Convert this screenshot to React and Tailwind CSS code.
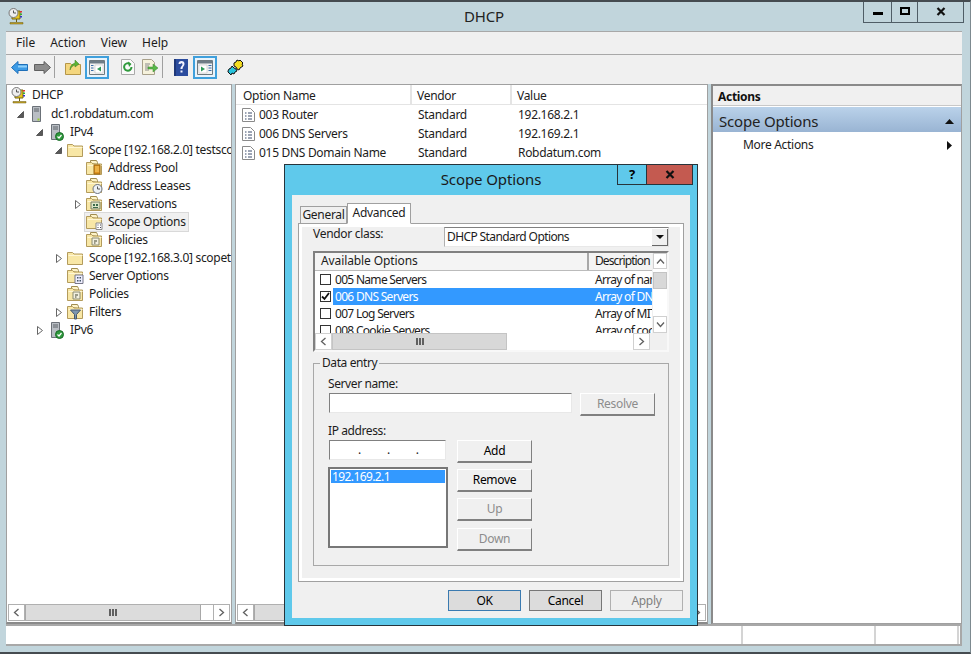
import React from "react";

const Folder = ({ children, tab = false }) => (
  <svg width="17" height="16" viewBox="0 0 17 16" className="shrink-0">
    {tab && <path d="M4.500 3.500V.5h6l1 2v2z" fill="#fdf3c8" stroke="#a08c50" />}
    <path d="M.5 14.500V2.500h5L7 4h8.500v10.500z" fill="#f8e7a6" stroke="#b39b5c" />
    <path d="M1.500 5h14v1h-14z" fill="#fff6d4" />
    {children}
  </svg>
);

const Expanded = () => (
  <svg width="7" height="7" viewBox="0 0 7 7"><path d="M6.500.5v6h-6z" fill="#595959" stroke="#595959" /></svg>
);
const Collapsed = () => (
  <svg width="6" height="9" viewBox="0 0 6 9"><path d="M.5.5l5 4-5 4z" fill="#fff" stroke="#666" /></svg>
);

const DhcpIcon = () => (
  <svg width="17" height="17" viewBox="0 0 17 17" className="shrink-0">
    <path d="M4 3h8v8H4z" fill="#e8c520" stroke="#7a6a10" />
    <circle cx="5.500" cy="5" r="4.500" fill="#eee" stroke="#777" />
    <path d="M5.500 2.500V5H8" fill="none" stroke="#555" />
    <path d="M12 3h2v1.500h-2z" fill="#d33" />
    <path d="M12 5.500h2V7h-2z" fill="#3a3" />
    <path d="M12 8h2v1.500h-2z" fill="#33c" />
    <path d="M8 11h1v3H8z" fill="#6a5a10" />
    <path d="M2 14.500h13V16H2z" fill="#c6a525" stroke="#6a5a10" strokeWidth=".5" />
  </svg>
);
const ServerIcon = ({ check }) => (
  <svg width="14" height="17" viewBox="0 0 14 17" className="shrink-0">
    <path d="M1.500.5h8v15h-8z" fill="#b9bec4" stroke="#6b7178" />
    <path d="M3 3h5M3 5h5" stroke="#5c6268" />
    {!check && <path d="M6.500 12.500h2v2h-2z" fill="#9c3" />}
    {check && <circle cx="9.500" cy="12.500" r="4" fill="#2e9a3c" stroke="#1a6a28" />}
    {check && <path d="M7.500 12.500L9 14l2.500-3" fill="none" stroke="#fff" strokeWidth="1.200" />}
  </svg>
);
const PropIcon = () => (
  <svg width="13" height="14" viewBox="0 0 13 14" className="shrink-0">
    <path d="M.5.5h8l4 4v9H.5z" fill="#fff" stroke="#8a8a8a" />
    <path d="M3 5h1.500M6 5h4M3 8h1.500M6 8h4M3 11h1.500M6 11h4" stroke="#3b4a6b" />
  </svg>
);

const iconFor = {
  server: <ServerIcon />,
  ipv: <ServerIcon check />,
  folder: <Folder />,
  pool: <Folder tab><path d="M8 5h6v9H8z" fill="#e0941e" stroke="#9a6410" /><path d="M9 7h4M9 9h4M9 11h4" stroke="#fbd070" /></Folder>,
  leases: <Folder tab><circle cx="11.500" cy="11" r="4.500" fill="#eef2f6" stroke="#6b7280" /><path d="M11.500 8.500V11H14" fill="none" stroke="#555" /></Folder>,
  res: <Folder tab><path d="M5 6h9v7H5z" fill="#dfe6c8" stroke="#7a7f60" /><path d="M7 8h2v2H7zM10 8h2v2h-2zM7 11h5v1H7z" fill="#3c6a4a" /></Folder>,
  opts: <Folder tab><path d="M10 9h6v6.500h-6z" fill="#fff" stroke="#8a8a8a" /><path d="M11.500 11h1M14 11h1M11.500 13.500h1M14 13.500h1" stroke="#445" /></Folder>,
  sopts: <Folder tab><path d="M8 7h8v8.500H8z" fill="#eef" stroke="#778" /><path d="M10 9h1.500v1.500H10zM12.500 9H14v1.500h-1.500zM10 12h1.500v1.500H10zM12.500 12H14v1.500h-1.500z" fill="#456" /></Folder>,
  pol: <Folder tab><path d="M6 6h7v7H6z" fill="#f3f0e0" stroke="#8a8a70" /><path d="M8 8h3v2H8zM8 10h1.500v2H8z" fill="#9a9a88" /></Folder>,
  filt: <Folder tab><path d="M3.500 6h10l-4 4.500V15h-2v-4.500z" fill="#7d97b0" stroke="#46586c" /></Folder>,
};

const tree = [
  { t: "dc1.robdatum.com", i: "server", cls: "pl-[8px]", ex: "e" },
  { t: "IPv4", i: "ipv", cls: "pl-[27px]", ex: "e" },
  { t: "Scope [192.168.2.0] testscope", i: "folder", cls: "pl-[46px]", ex: "e" },
  { t: "Address Pool", i: "pool", cls: "pl-[65px]" },
  { t: "Address Leases", i: "leases", cls: "pl-[65px]" },
  { t: "Reservations", i: "res", cls: "pl-[65px]", ex: "c" },
  { t: "Scope Options", i: "opts", cls: "pl-[65px]", sel: true },
  { t: "Policies", i: "pol", cls: "pl-[65px]" },
  { t: "Scope [192.168.3.0] scopetwo", i: "folder", cls: "pl-[46px]", ex: "c" },
  { t: "Server Options", i: "sopts", cls: "pl-[46px]" },
  { t: "Policies", i: "pol", cls: "pl-[46px]" },
  { t: "Filters", i: "filt", cls: "pl-[46px]", ex: "c" },
  { t: "IPv6", i: "ipv", cls: "pl-[27px]", ex: "c" },
];

const TreeRow = ({ r }) => (
  <div className={`flex items-center h-[18px] whitespace-nowrap ${r.cls}`}>
    <span className="w-[13px] pr-[2px] flex items-center justify-center shrink-0">
      {r.ex === "e" && <Expanded />}
      {r.ex === "c" && <Collapsed />}
    </span>
    <span className={`flex items-center h-[18px] ${r.sel ? "bg-[#f0f0f0] outline outline-[#d9d9d9] pr-[2px]" : ""}`}>
      <span className="w-[19px] flex items-center justify-center shrink-0">{iconFor[r.i]}</span>
      <span className="pl-[4px] pb-[1px]">{r.t}</span>
    </span>
  </div>
);

const ScrollBtn = ({ dir, cls = "" }) => (
  <div className={`flex items-center justify-center shrink-0 bg-white ${cls}`}>
    <svg width="9" height="9" viewBox="0 0 9 9">
      {dir === "l" && <path d="M6.500 1l-4 3.500 4 3.500" fill="none" stroke="#606060" strokeWidth="1.300" />}
      {dir === "r" && <path d="M2.500 1l4 3.500-4 3.500" fill="none" stroke="#606060" strokeWidth="1.300" />}
      {dir === "u" && <path d="M1 6.500l3.500-4 3.500 4" fill="none" stroke="#606060" strokeWidth="1.300" />}
      {dir === "d" && <path d="M1 2.500l3.500 4 3.500-4" fill="none" stroke="#606060" strokeWidth="1.300" />}
    </svg>
  </div>
);
const Grip = () => (
  <svg width="8" height="7" viewBox="0 0 8 7"><path d="M0 0h2v7H0zM3 0h2v7H3zM6 0h2v7H6z" fill="#606060" /></svg>
);

const Btn = ({ children, dis, cls = "" }) => (
  <div className={`flex items-center justify-center w-[75px] h-[23px] bg-[#f0f0f0] border border-t-white border-l-white border-r-[#808080] border-b-[#808080] border-b-2 ${dis ? "text-[#8c8c8c]" : "text-black"} ${cls}`}>
    {children}
  </div>
);

const ToolBox = ({ children }) => (
  <div className="w-[24px] h-[23px] border-2 border-[#3fa0dc] bg-[#e8f3fb] flex items-center justify-center shrink-0">{children}</div>
);

const PaneIcon = ({ right }) => (
  <svg width="16" height="15" viewBox="0 0 16 15">
    <path d="M.5.5h15v14H.5z" fill="#f2f2f2" stroke="#6f7a80" />
    <path d="M1 1h14v2.500H1z" fill="#6e7c86" />
    {right ? (
      <>
        <path d="M2 5h8v8H2z" fill="#fff" stroke="#bbb" strokeWidth=".5" />
        <path d="M4 6.500L8 9l-4 2.500z" fill="#2f9a58" />
        <path d="M11.500 5.500h3M11.500 8h3M11.500 10.500h3" stroke="#3a6ea8" />
      </>
    ) : (
      <>
        <path d="M6 5h8v8H6z" fill="#fff" stroke="#bbb" strokeWidth=".5" />
        <path d="M12 6.500L8 9l4 2.500z" fill="#2f9a58" />
        <path d="M2 5.500h2.500M2 8h2.500M2 10.500h2.500" stroke="#3a6ea8" />
      </>
    )}
  </svg>
);

const Check = ({ on }) => (
  <span className="w-[11px] h-[11px] border border-[#333] bg-white flex items-center justify-center shrink-0">
    {on && (
      <svg width="9" height="9" viewBox="0 0 9 9"><path d="M1 4.500L3.500 7 8 1" fill="none" stroke="#111" strokeWidth="1.800" /></svg>
    )}
  </span>
);

const options = [
  { n: "005 Name Servers", d: "Array of name" },
  { n: "006 DNS Servers", d: "Array of DNS", on: true },
  { n: "007 Log Servers", d: "Array of MIT" },
  { n: "008 Cookie Servers", d: "Array of cook" },
];

const Dialog = () => (
  <div className="absolute left-[284px] top-[162px] w-[414px] h-[462px] border border-[#27343b] bg-[#5fc9eb] flex flex-col px-[7px] pb-[7px]">
    <div className="h-[30px] shrink-0 relative flex items-center justify-center text-[15px] tracking-[-0.1px] text-[#1a1a1a] pb-[1px]">
      Scope Options
      <div className="absolute -top-px right-[-3px] flex h-[21px]">
        <div className="w-[29px] border border-[#27343b] border-r-0 flex items-center justify-center font-bold text-[13px] text-black">?</div>
        <div className="w-[47px] border border-[#27343b] bg-[#c45a50] flex items-center justify-center font-bold text-black">
          <svg width="10" height="9" viewBox="0 0 10 9"><path d="M1.500 1l7 7M8.500 1l-7 7" stroke="#111" strokeWidth="2.200" /></svg>
        </div>
      </div>
    </div>
    <div className="flex-1 bg-[#f0f0f0] flex flex-col px-[6px] pt-[7px] min-h-0">
      <div className="flex items-end h-[21px] ml-[2px] relative z-10">
        <div className="w-[47px] h-[17px] border border-[#a0a0a0] border-b-0 flex items-center justify-center">General</div>
        <div className="w-[64px] h-[21px] bg-white border border-[#a0a0a0] border-b-white flex items-center justify-center translate-y-[1px] pb-[2px]">Advanced</div>
      </div>
      <div className="h-[359px] border border-[#a0a0a0] bg-white p-[3px]">
        <div className="h-full bg-[#f0f0f0] pl-[11px] pr-[11px] flex flex-col">
          <div className="flex h-[20px] items-start">
            <span className="w-[131px] leading-[14px]">Vendor class:</span>
            <div className="w-[225px] h-[20px] bg-white border border-t-[#808080] border-l-[#b0b0b0] border-r-[#d8d8d8] border-b-[#e8e8e8] flex items-center justify-between pl-[2px]">
              <span className="tracking-[-0.6px]">DHCP Standard Options</span>
              <div className="w-[16px] h-[17px] bg-[#f0f0f0] border-r border-b border-[#666] flex items-center justify-center">
                <svg width="8" height="4" viewBox="0 0 8 4"><path d="M0 0h8L4 4z" fill="#111" /></svg>
              </div>
            </div>
          </div>
          <div className="mt-[4px] h-[101px] w-[356px] border-2 border-t-[#808080] border-l-[#808080] border-r-[#f8f8f8] border-b-[#f8f8f8] bg-white flex flex-col overflow-hidden">
            <div className="flex flex-1 min-h-0">
              <div className="w-[337px] min-w-0 overflow-hidden">
                <div className="flex h-[18px] border-b border-[#bbb] bg-[#f4f4f4]">
                  <div className="w-[274px] shrink-0 pl-[6px] border-r-2 border-[#a8a8a8] leading-[16px] tracking-[-0.1px]">Available Options</div>
                  <div className="pl-[6px] leading-[16px] tracking-[-0.9px] whitespace-nowrap">Description</div>
                </div>
                {options.map((o) => (
                  <div key={o.n} className="flex h-[17px] items-center whitespace-nowrap">
                    <span className="w-[18px] pl-[5px] shrink-0"><Check on={o.on} /></span>
                    <span className={`flex flex-1 h-[17px] items-center min-w-0 overflow-hidden tracking-[-0.7px] ${o.on ? "bg-[#3399ff] text-white" : ""}`}>
                      <span className="w-[262px] pl-[2px] shrink-0">{o.n}</span>
                      <span>{o.d}</span>
                    </span>
                  </div>
                ))}
              </div>
              <div className="w-[15px] shrink-0 flex flex-col bg-white border-l border-[#f0f0f0]">
                <ScrollBtn dir="u" cls="h-[16px] border border-[#d0d0d0]" />
                <div className="h-[17px] mt-[3px] bg-[#d8d8d8] border border-[#c4c4c4]" />
                <div className="flex-1" />
                <ScrollBtn dir="d" cls="h-[17px] border border-[#d0d0d0]" />
              </div>
            </div>
            <div className="flex h-[17px] shrink-0 w-full bg-white">
              <ScrollBtn dir="l" cls="w-[17px] border border-[#d0d0d0]" />
              <div className="w-[175px] bg-[#d8d8d8] border border-[#c4c4c4] flex items-center justify-center"><Grip /></div>
              <div className="flex-1" />
              <ScrollBtn dir="r" cls="w-[17px] border border-[#d0d0d0]" />
              <div className="w-[17px] bg-[#f0f0f0]" />
            </div>
          </div>
          <div className="relative mt-[11px] h-[203px] w-[356px] border border-[#a8a8a8] flex flex-col pl-[14px]">
            <span className="absolute -top-[8px] left-[6px] bg-[#f0f0f0] px-[2px] leading-[14px] tracking-[-0.4px]">Data entry</span>
            <span className="mt-[13px] leading-[14px] tracking-[-0.4px]">Server name:</span>
            <div className="flex mt-[2px] gap-[8px]">
              <div className="w-[243px] h-[20px] ml-px bg-white border border-t-[#808080] border-l-[#808080] border-r-[#e8e8e8] border-b-[#e8e8e8]" />
              <Btn dis>Resolve</Btn>
            </div>
            <span className="mt-[8px] leading-[14px] tracking-[-0.4px]">IP address:</span>
            <div className="flex mt-[2px] gap-[9px]">
              <div className="flex flex-col gap-[7px] w-[120px]">
                <div className="w-[117px] h-[20px] ml-px bg-white border border-t-[#808080] border-l-[#808080] border-r-[#e8e8e8] border-b-[#e8e8e8] flex items-center text-[#222] pl-[28px] gap-[26px] leading-[14px]">
                  <span>.</span><span>.</span><span>.</span>
                </div>
                <div className="w-[120px] h-[81px] border-2 border-[#777] bg-white p-px">
                  <div className="bg-[#3399ff] text-white h-[13px] leading-[13px] pl-[1px] tracking-[-0.6px]">192.169.2.1</div>
                </div>
              </div>
              <div className="flex flex-col gap-[6px]">
                <Btn>Add</Btn>
                <Btn>Remove</Btn>
                <Btn dis>Up</Btn>
                <Btn dis cls="mt-px">Down</Btn>
              </div>
            </div>
          </div>
        </div>
      </div>
      <div className="flex justify-end gap-[8px] pt-[8px] pr-[1px]">
        <div className="w-[73px] h-[21px] bg-[#dcdcdc] border border-[#3a7ab0] flex items-center justify-center text-black">OK</div>
        <div className="w-[73px] h-[21px] bg-[#dcdcdc] border border-[#777] flex items-center justify-center text-black">Cancel</div>
        <div className="w-[73px] h-[21px] bg-[#efefef] border border-[#b0b0b0] flex items-center justify-center text-[#808080]">Apply</div>
      </div>
    </div>
  </div>
);

export default function App() {
  return (
    <div className="relative w-[971px] h-[654px] overflow-hidden bg-[#c1d5dc] text-[12px] text-[#1c1c1c] border-t-2 border-t-[#454b50] border-b-2 border-b-[#454b50] border-r border-r-[#7d8a90] font-['Noto_Sans',sans-serif] tracking-[-0.3px] flex flex-col leading-none">
      <div className="h-[29px] shrink-0 relative flex items-center justify-center">
        <span className="text-[15px] text-[#222] pr-[2px] pb-[1px] tracking-[-0.1px]">DHCP</span>
        <div className="absolute left-[8px] top-[6px]"><DhcpIcon /></div>
        <div className="absolute top-[-2px] left-[863px] w-[101px] h-[23px] border border-[#4f5d66] border-t-0 flex">
          <div className="w-[28px] border-r border-[#4f5d66] flex items-center justify-center">
            <span className="w-[10px] h-[3px] bg-black mt-[4px]" />
          </div>
          <div className="w-[26px] border-r border-[#4f5d66] flex items-center justify-center">
            <span className="w-[10px] h-[8px] border-2 border-black" />
          </div>
          <div className="flex-1 flex items-center justify-center">
            <svg width="10" height="9" viewBox="0 0 10 9"><path d="M1.500 1l7 7M8.500 1l-7 7" stroke="#111" strokeWidth="2.200" /></svg>
          </div>
        </div>
      </div>
      <div className="flex-1 min-h-0 pl-[6px] pr-[8px] pb-[6px] flex flex-col">
        <div className="h-[24px] shrink-0 bg-[#f0f0f0] border-t border-b border-[#a8a8a8] flex items-center pl-[10px] gap-[15px] tracking-normal">
          <span>File</span><span>Action</span><span>View</span><span>Help</span>
        </div>
        <div className="h-[29px] shrink-0 bg-[#f0f0f0] flex items-center pl-[5px] pb-[5px]">
          <svg width="17" height="13" viewBox="0 0 17 13" className="shrink-0"><path d="M.5 6.500L7 .5v3h9.500v6H7v3z" fill="#3c9be6" stroke="#1f6fb8" /><path d="M7 4.500h9v2H7z" fill="#8fd0fa" /></svg>
          <svg width="17" height="13" viewBox="0 0 17 13" className="ml-[6px] shrink-0"><path d="M16.500 6.500L10 .5v3H.5v6H10v3z" fill="#8c8c8c" stroke="#606060" /></svg>
          <span className="w-[1px] h-[22px] ml-[3px] bg-[#a0a0a0] shrink-0" />
          <svg width="16" height="16" viewBox="0 0 16 16" className="ml-[10px] shrink-0"><path d="M.5 15.500v-11h5l1 1h9v10z" fill="#f4d67e" stroke="#b59648" /><path d="M5 11c0-4 2-6 5-7V1l4 4-4 3V6c-2 .5-4 2-5 5z" fill="#5cb335" stroke="#3d7f20" strokeWidth=".5" /></svg>
          <div className="ml-[4px]"><ToolBox><PaneIcon /></ToolBox></div>
          <svg width="14" height="16" viewBox="0 0 14 16" className="ml-[12px] shrink-0"><path d="M.5.500h9l4 4v11H.5z" fill="#fafafa" stroke="#aaa" /><path d="M10.500 8A3.700 3.700 0 1 1 9 5" fill="none" stroke="#2f9a3c" strokeWidth="2" /><path d="M7 2.500L10.500 5 8 8z" fill="#2f9a3c" /></svg>
          <svg width="16" height="16" viewBox="0 0 16 16" className="ml-[7px] shrink-0"><path d="M.5.500h9l3 3v12H.5z" fill="#f6f2dc" stroke="#a8a08a" /><path d="M3 5h5M3 7h4M3 9h4M3 11h4" stroke="#8a8a8a" /><path d="M6 8h5V5l5 4-5 4v-3H6z" fill="#58b848" stroke="#3d8a30" strokeWidth=".5" /></svg>
          <span className="w-[1px] h-[22px] ml-[4px] bg-[#a0a0a0] shrink-0" />
          <svg width="14" height="17" viewBox="0 0 14 17" className="ml-[11px] shrink-0"><path d="M0 0h14v17H0z" fill="#2b4c9e" /><path d="M0 0h2v17H0z" fill="#1f3878" /><path d="M4.500 5c0-2 1-3 3-3s3 1 3 3c0 2-2 2.500-2 5h-2c0-3 2-3 2-5 0-1-2-1-2 0z" fill="#f2f2ff" /><path d="M6.500 11.500h2v2h-2z" fill="#f2f2ff" /></svg>
          <div className="ml-[5px]"><ToolBox><PaneIcon right /></ToolBox></div>
          <svg width="17" height="17" viewBox="0 0 17 17" className="ml-[10px] shrink-0"><path d="M7 4l2-1 1-2 2 1 1-1 3 3-1 1 1 2-3 2-1 2-2-1-1-2-2-1z" fill="#f5dd20" stroke="#111" /><path d="M1 12l1-2 2-1 1-2 2 2 2 1 1 2-2 1-1 2-2-1-1 2-2-2-1-1z" fill="#27c3dc" stroke="#111" /></svg>
        </div>
        <div className="flex-1 min-h-0 flex gap-[3px]">
          <div className="w-[226px] shrink-0 bg-white border border-[#a0a0a0] border-b-2 border-b-[#8a8a8a] flex flex-col min-h-0">
            <div className="flex-1 min-h-0 pt-[1px] overflow-hidden">
              <div className="flex items-center h-[18px] whitespace-nowrap pl-[4px]">
                <DhcpIcon /><span className="pl-[4px]">DHCP</span>
              </div>
              <div className="h-[1px]" />
              {tree.map((r, idx) => (
                <TreeRow key={idx} r={r} />
              ))}
            </div>
            <div className="h-[17px] mx-[1px] mb-[1px] flex shrink-0 border border-[#b0b0b0] bg-white">
              <ScrollBtn dir="l" cls="w-[16px] border-r border-[#b0b0b0]" />
              <div className="w-[176px] bg-[#dcdcdc] border-r border-l border-[#a8a8a8] flex items-center justify-center"><Grip /></div>
              <div className="flex-1" />
              <ScrollBtn dir="r" cls="w-[16px] border-l border-[#b0b0b0]" />
            </div>
          </div>
          <div className="w-[473px] shrink-0 bg-white border border-[#a0a0a0] border-b-2 border-b-[#8a8a8a] flex flex-col min-h-0">
            <div className="flex h-[20px] border-b border-[#e4e4e4] shrink-0 items-center">
              <div className="w-[176px] pl-[7px] pt-[2px] border-r-2 border-[#e4e4e4] h-full flex items-center">Option Name</div>
              <div className="w-[100px] pl-[5px] pt-[2px] border-r-2 border-[#e4e4e4] h-full flex items-center">Vendor</div>
              <div className="pl-[5px] pt-[2px]">Value</div>
            </div>
            <div className="flex-1 min-h-0">
              {[
                ["003 Router", "192.168.2.1"],
                ["006 DNS Servers", "192.169.2.1"],
                ["015 DNS Domain Name", "Robdatum.com"],
              ].map(([a, b]) => (
                <div key={a} className="flex h-[19px] items-center">
                  <span className="w-[182px] pl-[6px] flex items-center gap-[4px]"><PropIcon />{a}</span>
                  <span className="w-[100px]">Standard</span>
                  <span>{b}</span>
                </div>
              ))}
            </div>
            <div className="h-[17px] mx-[1px] mb-[1px] flex shrink-0 border border-[#b0b0b0] bg-white">
              <ScrollBtn dir="l" cls="w-[16px] border-r border-[#b0b0b0]" />
              <div className="flex-1 bg-[#dcdcdc] border-l border-[#a8a8a8]" />
              <ScrollBtn dir="r" cls="w-[16px] border-l border-[#b0b0b0]" />
            </div>
          </div>
          <div className="flex-1 min-w-0 bg-white border border-[#a0a0a0] border-t-[#8a8a8a] border-t-2 border-l-2 border-l-[#8a8a8a] flex flex-col">
            <div className="h-[20px] bg-[#f0f0f0] border-b border-[#c8c8c8] flex items-center pl-[5px] pt-[3px] font-bold text-[#111] tracking-[-0.3px]">Actions</div>
            <div className="h-[25px] mt-[1px] bg-gradient-to-b from-[#bad2ea] to-[#99b4d3] flex items-center justify-between pl-[6px] pr-[7px] pt-[3px] text-[15px] tracking-[-0.2px] text-[#222]">
              <span>Scope Options</span>
              <svg width="9" height="5" viewBox="0 0 9 5"><path d="M0 5h9L4.500 0z" fill="#111" /></svg>
            </div>
            <div className="h-[24px] flex items-center justify-between pl-[30px] pr-[9px] pt-[2px]">
              <span>More Actions</span>
              <svg width="5" height="9" viewBox="0 0 5 9"><path d="M0 0v9l5-4.500z" fill="#111" /></svg>
            </div>
          </div>
        </div>
        <div className="h-[22px] shrink-0 bg-white border-b-2 border-b-[#a8a8a8] border-r-2 border-r-[#a8a8a8] border-t-2 border-t-[#a8a8a8] flex justify-end">
          <div className="w-[133px] border-l-2 border-[#d4d4d4]" />
          <div className="w-[85px] border-l-2 border-r-2 border-[#d4d4d4] mr-[1px]" />
        </div>
      </div>
      <Dialog />
    </div>
  );
}
